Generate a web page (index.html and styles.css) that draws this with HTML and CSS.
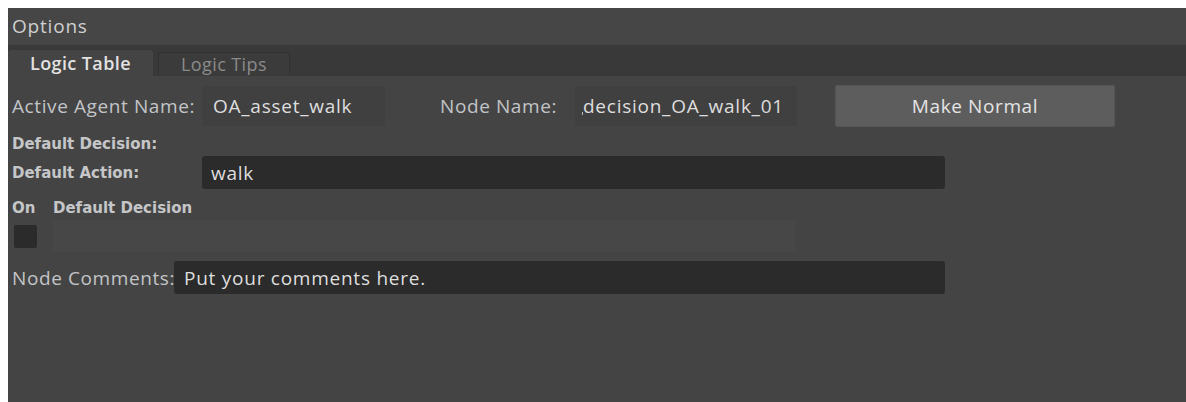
FILE: index.html
```html
<!DOCTYPE html>
<html>
<head>
<meta charset="utf-8">
<link rel="stylesheet" href="styles.css">
</head>
<body>
<div class="panel">
  <div class="titlebar">Options</div>
  <div class="tabbar">
    <div class="tab tab-active">Logic Table</div>
    <div class="tab">Logic Tips</div>
  </div>
  <div class="content">
    <div class="row row-names">
      <span class="label label-agent">Active Agent Name:</span>
      <div class="field field-soft field-agent">OA_asset_walk</div>
      <span class="label label-node">Node Name:</span>
      <div class="field field-soft field-node"><span class="caret-mark"></span>decision_OA_walk_01</div>
      <button class="btn">Make Normal</button>
    </div>
    <div class="section-title">Default Decision:</div>
    <div class="row row-action">
      <span class="label-bold label-action">Default Action:</span>
      <div class="field field-dark field-action">walk</div>
    </div>
    <div class="section-title heading-pair">
      <span class="col-on">On</span><span>Default Decision</span>
    </div>
    <div class="row row-decision">
      <span class="checkbox"></span>
      <div class="field field-flat field-decision"></div>
    </div>
    <div class="row row-comments">
      <span class="label label-comments">Node Comments:</span>
      <div class="field field-dark field-comments">Put your comments here.</div>
    </div>
  </div>
</div>
</body>
</html>
```
FILE: styles.css
```css
html, body {
  background: #ffffff;
}
body {
  margin: 8px 0 0 8px;
  overflow: hidden;
  font-family: "Open Sans", "Noto Sans", sans-serif;
}
.panel {
  width: 1178px;
  height: 394px;
  background: #444444;
  color: #c9c9c9;
  display: flex;
  flex-direction: column;
}
.titlebar {
  height: 37px;
  line-height: 36px;
  padding-left: 4px;
  font-size: 19px;
  letter-spacing: 0.8px;
  color: #cfcfcf;
  background: #464646;
}
.tabbar {
  height: 31px;
  background: #393939;
  display: flex;
  align-items: flex-end;
  gap: 5px;
}
.tab {
  height: 24px;
  width: 132px;
  box-sizing: border-box;
  border: 1px solid #333333;
  border-bottom: none;
  border-radius: 3px 3px 0 0;
  background: #3b3b3b;
  color: #8a8a8a;
  font-size: 18px;
  letter-spacing: 0.4px;
  line-height: 22px;
  text-align: center;
}
.tab-active {
  height: 26px;
  width: 145px;
  border: none;
  background: #444444;
  color: #e2e2e2;
  line-height: 26px;
  font-weight: 600;
  letter-spacing: 0.4px;
}
.content {
  display: flex;
  flex-direction: column;
  padding: 9px 0 0 4px;
}
.row {
  display: flex;
  align-items: center;
}
.label {
  font-size: 19px;
  letter-spacing: 0.6px;
  color: #c2c4c7;
  white-space: nowrap;
}
.label-bold,
.section-title {
  font-family: "DejaVu Sans", "Open Sans", sans-serif;
  font-size: 15px;
  font-weight: 700;
  color: #c4c6c8;
  white-space: nowrap;
}
.field {
  box-sizing: border-box;
  font-size: 19px;
  letter-spacing: 0.75px;
  color: #dedede;
  white-space: nowrap;
  overflow: hidden;
  display: flex;
  align-items: center;
}
.field-soft {
  background: #404040;
  border-radius: 2px;
  height: 40px;
  padding-left: 11px;
}
.field-dark {
  background: #2b2b2b;
  border-radius: 3px;
  height: 33px;
  padding-left: 9px;
}
.field-flat {
  background: #474747;
  height: 32px;
}
.row-names {
  height: 42px;
}
.label-agent {
  width: 190px;
}
.field-agent {
  width: 183px;
}
.label-node {
  margin-left: 55px;
  width: 135px;
}
.field-node {
  width: 222px;
  padding-left: 7px;
}
.caret-mark {
  width: 1px;
  height: 3px;
  margin-top: 14px;
  background: #bbbbbb;
}
.btn {
  margin-left: 38px;
  width: 280px;
  height: 42px;
  border: 1px solid #555555;
  border-radius: 2px;
  background: #5d5d5d;
  color: #e4e4e4;
  font-family: inherit;
  font-size: 19px;
  letter-spacing: 0.6px;
  padding: 0;
}
.section-title {
  margin-top: 9px;
  height: 16px;
  line-height: 16px;
}
.row-action {
  margin-top: 4px;
}
.label-action {
  width: 190px;
}
.field-action {
  width: 743px;
}
.heading-pair {
  margin-top: 11px;
  display: flex;
}
.col-on {
  width: 41px;
}
.row-decision {
  margin-top: 4px;
}
.checkbox {
  width: 23px;
  height: 23px;
  margin-left: 2px;
  background: #2b2b2b;
  border-radius: 2px;
}
.field-decision {
  margin-left: 16px;
  width: 742px;
}
.row-comments {
  margin-top: 9px;
}
.label-comments {
  width: 162px;
}
.field-comments {
  width: 771px;
  padding-left: 10px;
}
```
